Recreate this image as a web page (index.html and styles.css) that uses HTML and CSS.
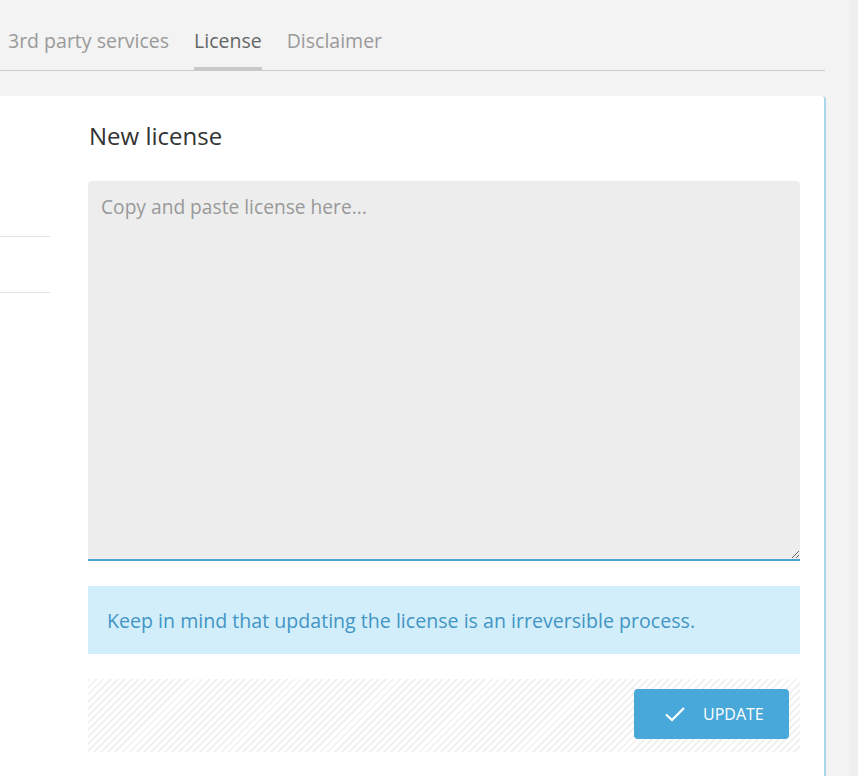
FILE: index.html
```html
<!DOCTYPE html>
<html lang="en">
<head>
  <meta charset="UTF-8">
  <meta name="viewport" content="width=device-width, initial-scale=1.0">
  <title>License</title>
  <link rel="stylesheet" href="styles.css">
</head>
<body>
  <div class="page">
    <div class="main">
      <nav class="tabs">
        <a class="tab">3rd party services</a>
        <a class="tab active">License</a>
        <a class="tab">Disclaimer</a>
      </nav>

      <div class="panel">
        <div class="side">
          <div class="side-item"></div>
        </div>

        <div class="content">
          <h2>New license</h2>
          <textarea class="license-input" placeholder="Copy and paste license here..."></textarea>
          <div class="info">Keep in mind that updating the license is an irreversible process.</div>
          <div class="actions">
            <button class="btn-update">
              <svg width="22" height="16" viewBox="0 0 22 16"><path d="M2 8.5 L8 14 L20 2" fill="none" stroke="#fff" stroke-width="2.2"/></svg>
              UPDATE
            </button>
          </div>
        </div>
      </div>
    </div>
    <div class="edge"></div>
  </div>
</body>
</html>
```

FILE: styles.css
```css
body {
  margin: 0;
  background-color: #f3f3f3;
  font-family: "Open Sans", Arial, sans-serif;
  overflow: hidden;
}

.page {
  display: flex;
  height: 776px;
}

.main {
  width: 850px;
}

.edge {
  flex: 1;
  background-color: #efefef;
}

.tabs {
  width: 825px;
  height: 71px;
  display: flex;
  align-items: flex-end;
  gap: 25px;
  padding-left: 8px;
  box-sizing: border-box;
  border-bottom: 1px solid #cccccc;
}

.tab {
  font-size: 19.5px;
  color: #9a9a9a;
  padding-bottom: 14px;
  border-bottom: 4px solid transparent;
  margin-bottom: -1px;
  line-height: 24px;
}

.tab.active {
  color: #666666;
  border-bottom-color: #c9c9c9;
}

.panel {
  margin-top: 25px;
  width: 826px;
  height: 680px;
  background-color: #fff;
  border-right: 2px solid #a9d8ea;
  border-top-right-radius: 4px;
  display: flex;
  box-sizing: border-box;
}

.side {
  width: 50px;
  padding-top: 140px;
}

.side-item {
  height: 55px;
  border-top: 1px solid #e2e2e2;
  border-bottom: 1px solid #e2e2e2;
}

.content {
  margin-left: 38px;
  width: 712px;
  padding-top: 25px;
}

h2 {
  margin: 0 0 30px 1px;
  font-size: 24px;
  font-weight: normal;
  color: #333;
  line-height: 30px;
}

.license-input {
  display: block;
  width: 100%;
  height: 380px;
  box-sizing: border-box;
  padding: 12px 13px;
  border: none;
  border-bottom: 2px solid #4aa3d6;
  border-radius: 4px 4px 0 0;
  background-color: #ededed;
  font-family: inherit;
  font-size: 19.2px;
  color: #333;
  resize: vertical;
  outline: none;
}

.license-input::placeholder {
  color: #999;
}

.info {
  margin-top: 25px;
  height: 68px;
  display: flex;
  align-items: center;
  padding: 0 19px;
  background-color: #d2eefa;
  color: #4395c4;
  font-size: 19.6px;
}

.actions {
  margin-top: 25px;
  height: 73px;
  display: flex;
  justify-content: flex-end;
  align-items: flex-start;
  padding: 10px 11px 0 0;
  box-sizing: border-box;
  background: repeating-linear-gradient(135deg, #f1f1f1 0 2px, #fff 2px 5px);
}

.btn-update {
  width: 155px;
  height: 50px;
  display: flex;
  align-items: center;
  gap: 17px;
  padding-left: 30px;
  border: none;
  border-radius: 4px;
  background-color: #48a8d9;
  color: #fff;
  font-family: inherit;
  font-size: 16px;
  cursor: pointer;
}
```
